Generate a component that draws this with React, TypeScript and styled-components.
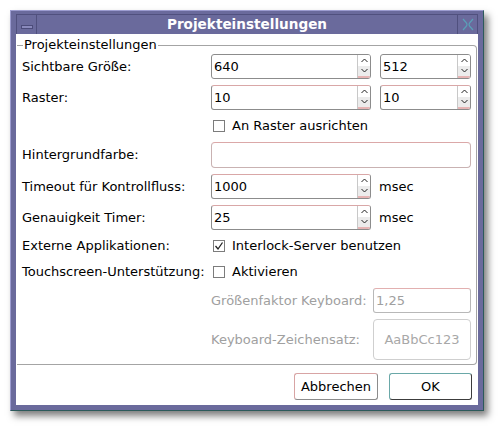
import React from 'react';
import styled, { createGlobalStyle } from 'styled-components';

const Global = createGlobalStyle`
  html, body { margin: 0; padding: 0; background: #fff; }
  body {
    font-family: "DejaVu Sans", "Liberation Sans", sans-serif;
    font-size: 13px;
    color: #000;
  }
  * { box-sizing: border-box; }
`;

const Page = styled.div`
  width: 504px;
  height: 432px;
  padding: 10px 0 0 10px;
`;

const Window = styled.div`
  width: 474px;
  height: 401px;
  background: #6a6a9c;
  border: 1px solid;
  border-color: #9c9cd0 #2c5a5a #2c5a5a #9c9cd0;
  padding: 3px 5px 5px 5px;
  box-shadow: 4px 5px 7px rgba(0, 0, 0, 0.5);
  display: flex;
  flex-direction: column;
`;

const TitleBar = styled.div`
  height: 20px;
  flex: none;
  display: flex;
  align-items: stretch;
  border: 1px solid #50507e;
  border-bottom: none;
`;

const TitleButton = styled.div<{ side: 'left' | 'right' }>`
  width: 20px;
  flex: none;
  display: flex;
  align-items: center;
  justify-content: center;
  ${p => (p.side === 'left' ? 'border-right: 1px solid #50507e;' : 'border-left: 1px solid #50507e;')}
`;

const MinBar = styled.div`
  width: 12px;
  height: 4px;
  margin-top: 4px;
  background: #8a8abc;
  border: 1px solid #4c4c7a;
`;

const Title = styled.div`
  flex: 1;
  text-align: center;
  color: #fff;
  font-weight: bold;
  font-size: 13.6px;
  line-height: 19px;
`;

const Content = styled.div`
  flex: 1;
  background: #fff;
  display: flex;
  flex-direction: column;
  padding: 3px 1px 5px 1px;
`;

const Group = styled.fieldset`
  margin: 0;
  padding: 1px 5px 4px 5px;
  border: 1px solid #a4a4a4;
  border-left: none;
  border-radius: 0 4px 4px 0;
  min-width: 0;
`;

const Legend = styled.legend`
  padding: 0 1px 0 1px;
  margin-left: 1px;
  font-size: 13px;
  line-height: 16px;
`;

const Form = styled.div`
  display: grid;
  grid-template-columns: 189px 260px;
  row-gap: 6px;
  align-items: center;
`;

const Label = styled.div<{ muted?: boolean }>`
  color: ${p => (p.muted ? '#a0a0a0' : '#000')};
  white-space: nowrap;
  line-height: 16px;
`;

const Pair = styled.div`
  display: grid;
  grid-template-columns: 160px 91px;
  column-gap: 9px;
`;

const WithUnit = styled.div`
  display: flex;
  align-items: center;
  gap: 8px;
`;

const SpinBox = styled.div<{ w: number; tint?: boolean }>`
  width: ${p => p.w}px;
  height: 25px;
  display: flex;
  border: 1px solid #8c8c8c;
  border-top-color: ${p => (p.tint ? '#d9a7a7' : '#8c8c8c')};
  border-radius: 3px;
  background: #fff;
  overflow: hidden;
`;

const Value = styled.div`
  flex: 1;
  padding-left: 2px;
  line-height: 23px;
`;

const Arrows = styled.div`
  width: 13px;
  flex: none;
  display: flex;
  flex-direction: column;
  border-left: 1px solid #c8c8c8;
`;

const Arrow = styled.div<{ down?: boolean }>`
  flex: 1;
  display: flex;
  align-items: center;
  justify-content: center;
  background: ${p => (p.down ? '#ececec' : '#fff')};
  ${p => (p.down ? 'border-bottom: 2px solid #e6b4b4;' : '')}
`;

const Unit = styled.span`
  line-height: 16px;
`;

const CheckRow = styled.label`
  display: flex;
  align-items: center;
  gap: 7px;
  padding-left: 2px;
  height: 20px;
  line-height: 16px;
`;

const Box = styled.span`
  width: 12px;
  height: 12px;
  border: 1px solid #7c7c7c;
  background: #fff;
  display: flex;
  align-items: center;
  justify-content: center;
`;

const ColorButton = styled.div`
  height: 26px;
  border: 1px solid #c9b2b2;
  border-top-color: #dba8a8;
  border-radius: 4px;
  background: #fff;
`;

const SubForm = styled.div`
  display: grid;
  grid-template-columns: 162px 98px;
  row-gap: 6px;
  align-items: center;
`;

const TextField = styled.div`
  height: 25px;
  border: 1px solid #b8b8b8;
  border-top-color: #e2b0b0;
  border-radius: 3px;
  padding-left: 2px;
  line-height: 23px;
  color: #a0a0a0;
`;

const FontButton = styled.div`
  height: 41px;
  border: 1px solid #cfcfcf;
  border-radius: 4px;
  display: flex;
  align-items: center;
  justify-content: center;
  color: #a8a8a8;
`;

const Buttons = styled.div`
  display: flex;
  justify-content: flex-end;
  gap: 11px;
  margin-top: 8px;
  padding-right: 5px;
`;

const Button = styled.button<{ primary?: boolean }>`
  height: 27px;
  width: ${p => (p.primary ? 83 : 84)}px;
  padding: 0;
  background: #fff;
  font-family: "DejaVu Sans", "Liberation Sans", sans-serif;
  font-size: 13px;
  color: #000;
  border-radius: 3px;
  border: 1px solid ${p => (p.primary ? '#3c3c3c' : '#8c8c8c')};
  border-top-color: ${p => (p.primary ? '#6aa8a8' : '#d8a4a4')};
  border-left-color: ${p => (p.primary ? '#6aa8a8' : '#d8a4a4')};
`;

const Up = () => (
  <svg width="7" height="5" viewBox="0 0 7 5">
    <polyline points="0.5,4 3.5,1 6.5,4" fill="none" stroke="#222" strokeWidth="1" />
  </svg>
);
const Down = () => (
  <svg width="7" height="5" viewBox="0 0 7 5">
    <polyline points="0.5,1 3.5,4 6.5,1" fill="none" stroke="#222" strokeWidth="1" />
  </svg>
);

const Spin: React.FC<{ value: string; w: number; tint?: boolean }> = ({ value, w, tint }) => (
  <SpinBox w={w} tint={tint}>
    <Value>{value}</Value>
    <Arrows>
      <Arrow><Up /></Arrow>
      <Arrow down><Down /></Arrow>
    </Arrows>
  </SpinBox>
);

const Check: React.FC<{ checked?: boolean; label: string }> = ({ checked, label }) => (
  <CheckRow>
    <Box>
      {checked && (
        <svg width="10" height="10" viewBox="0 0 10 10">
          <polyline points="1.5,5 4,8 8.5,1.5" fill="none" stroke="#222" strokeWidth="1.3" />
        </svg>
      )}
    </Box>
    {label}
  </CheckRow>
);

export default function App() {
  return (
    <Page>
      <Global />
      <Window>
        <TitleBar>
          <TitleButton side="left"><MinBar /></TitleButton>
          <Title>Projekteinstellungen</Title>
          <TitleButton side="right">
            <svg width="12" height="13" viewBox="0 0 12 13">
              <path d="M1 1 L4.5 5 M7.5 5 L11 1 M1 12 L4.5 8 M7.5 8 L11 12 M4.5 5 L5 6.5 L4.5 8 M7.5 5 L7 6.5 L7.5 8" fill="none" stroke="#5aa0b8" strokeWidth="1.2" />
            </svg>
          </TitleButton>
        </TitleBar>
        <Content>
          <Group>
            <Legend>Projekteinstellungen</Legend>
            <Form>
              <Label>Sichtbare Größe:</Label>
              <Pair>
                <Spin value="640" w={160} />
                <Spin value="512" w={91} />
              </Pair>
              <Label>Raster:</Label>
              <Pair>
                <Spin value="10" w={160} tint />
                <Spin value="10" w={91} tint />
              </Pair>
              <span />
              <Check label="An Raster ausrichten" />
              <Label>Hintergrundfarbe:</Label>
              <ColorButton />
              <Label>Timeout für Kontrollfluss:</Label>
              <WithUnit>
                <Spin value="1000" w={160} tint />
                <Unit>msec</Unit>
              </WithUnit>
              <Label>Genauigkeit Timer:</Label>
              <WithUnit>
                <Spin value="25" w={160} tint />
                <Unit>msec</Unit>
              </WithUnit>
              <Label>Externe Applikationen:</Label>
              <Check checked label="Interlock-Server benutzen" />
              <Label>Touchscreen-Unterstützung:</Label>
              <Check label="Aktivieren" />
              <span />
              <SubForm>
                <Label muted>Größenfaktor Keyboard:</Label>
                <TextField>1,25</TextField>
                <Label muted>Keyboard-Zeichensatz:</Label>
                <FontButton>AaBbCc123</FontButton>
              </SubForm>
            </Form>
          </Group>
          <Buttons>
            <Button>Abbrechen</Button>
            <Button primary>OK</Button>
          </Buttons>
        </Content>
      </Window>
    </Page>
  );
}
